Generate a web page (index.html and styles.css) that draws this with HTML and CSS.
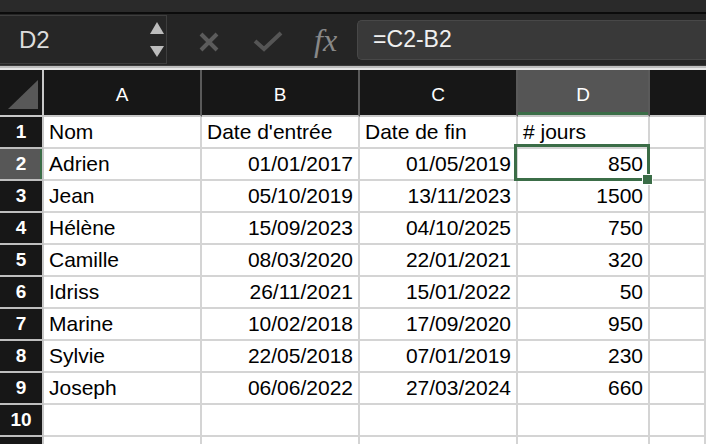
FILE: index.html
```html
<!DOCTYPE html>
<html>
  <head>
    <title>Classeur - jours</title>
    <link rel="stylesheet" href="styles.css">
  </head>
  <body>
    <div class="title-bar"></div>

    <div class="toolbar">
      <div class="name-box">
        <span class="name-text">D2</span>
        <div class="spinner">
          <span class="arrow-up"></span>
          <span class="arrow-down"></span>
        </div>
      </div>

      <svg class="icon icon-cancel" width="22" height="20" viewBox="0 0 22 20">
        <path d="M3 2 L19 18 M19 2 L3 18" stroke="#5b5b5b" stroke-width="4" fill="none"/>
      </svg>
      <svg class="icon icon-ok" width="30" height="21" viewBox="0 0 30 21">
        <path d="M2 10 L11 18 L28 2" stroke="#555555" stroke-width="4" fill="none"/>
      </svg>
      <span class="fx">fx</span>

      <div class="formula-box">=C2-B2</div>
    </div>

    <div class="divider"></div>

    <div class="sheet">
      <div class="corner"><span class="corner-mark"></span></div>
      <div class="col-head">A</div>
      <div class="col-head">B</div>
      <div class="col-head">C</div>
      <div class="col-head col-active">D</div>
      <div class="col-head col-last"></div>

      <div class="row-head">1</div>
      <div class="cell">Nom</div>
      <div class="cell">Date d'entrée</div>
      <div class="cell">Date de fin</div>
      <div class="cell"># jours</div>
      <div class="cell"></div>

      <div class="row-head row-active">2</div>
      <div class="cell">Adrien</div>
      <div class="cell num">01/01/2017</div>
      <div class="cell num">01/05/2019</div>
      <div class="cell num selected">850<span class="fill-handle"></span></div>
      <div class="cell"></div>

      <div class="row-head">3</div>
      <div class="cell">Jean</div>
      <div class="cell num">05/10/2019</div>
      <div class="cell num">13/11/2023</div>
      <div class="cell num">1500</div>
      <div class="cell"></div>

      <div class="row-head">4</div>
      <div class="cell">Hélène</div>
      <div class="cell num">15/09/2023</div>
      <div class="cell num">04/10/2025</div>
      <div class="cell num">750</div>
      <div class="cell"></div>

      <div class="row-head">5</div>
      <div class="cell">Camille</div>
      <div class="cell num">08/03/2020</div>
      <div class="cell num">22/01/2021</div>
      <div class="cell num">320</div>
      <div class="cell"></div>

      <div class="row-head">6</div>
      <div class="cell">Idriss</div>
      <div class="cell num">26/11/2021</div>
      <div class="cell num">15/01/2022</div>
      <div class="cell num">50</div>
      <div class="cell"></div>

      <div class="row-head">7</div>
      <div class="cell">Marine</div>
      <div class="cell num">10/02/2018</div>
      <div class="cell num">17/09/2020</div>
      <div class="cell num">950</div>
      <div class="cell"></div>

      <div class="row-head">8</div>
      <div class="cell">Sylvie</div>
      <div class="cell num">22/05/2018</div>
      <div class="cell num">07/01/2019</div>
      <div class="cell num">230</div>
      <div class="cell"></div>

      <div class="row-head">9</div>
      <div class="cell">Joseph</div>
      <div class="cell num">06/06/2022</div>
      <div class="cell num">27/03/2024</div>
      <div class="cell num">660</div>
      <div class="cell"></div>

      <div class="row-head">10</div>
      <div class="cell"></div>
      <div class="cell"></div>
      <div class="cell"></div>
      <div class="cell"></div>
      <div class="cell"></div>

      <div class="row-head"></div>
      <div class="cell"></div>
      <div class="cell"></div>
      <div class="cell"></div>
      <div class="cell"></div>
      <div class="cell"></div>
    </div>
  </body>
</html>
```

FILE: styles.css
```css
body {
  margin: 0;
  background-color: white;
  font-family: "Liberation Sans", Arial, sans-serif;
  overflow: hidden;
}

.title-bar {
  height: 12px;
  background-color: rgb(42, 42, 42);
  border-bottom: 2px solid rgb(11, 11, 11);
}

.toolbar {
  height: 51px;
  background-color: rgb(37, 37, 37);
  border-bottom: 1px solid rgb(58, 58, 58);
  display: flex;
  align-items: center;
}

.name-box {
  width: 167px;
  height: 49px;
  box-sizing: border-box;
  background-color: rgb(38, 38, 38);
  border: 1px solid rgb(62, 62, 62);
  border-left: none;
  display: flex;
  align-items: center;
  justify-content: space-between;
  padding-left: 19px;
}

.name-text {
  color: rgb(220, 220, 220);
  font-size: 24px;
}

.spinner {
  display: flex;
  flex-direction: column;
  gap: 12px;
  margin-right: 2px;
}

.arrow-up {
  width: 0;
  height: 0;
  border-left: 7px solid transparent;
  border-right: 7px solid transparent;
  border-bottom: 12px solid rgb(188, 188, 188);
}

.arrow-down {
  width: 0;
  height: 0;
  border-left: 7px solid transparent;
  border-right: 7px solid transparent;
  border-top: 11px solid rgb(188, 188, 188);
}

.icon-cancel {
  margin-left: 31px;
  margin-top: 4px;
}

.icon-ok {
  margin-left: 33px;
  margin-top: 4px;
}

.fx {
  font-family: "Liberation Serif", "Times New Roman", serif;
  font-style: italic;
  font-size: 32px;
  color: rgb(136, 136, 136);
  margin-left: 31px;
  margin-top: 2px;
}

.formula-box {
  flex: 1;
  margin-left: 20px;
  height: 40px;
  box-sizing: border-box;
  background-color: rgb(57, 57, 57);
  border: 1px solid rgb(72, 72, 72);
  border-right: none;
  border-radius: 5px 0 0 5px;
  color: rgb(240, 240, 240);
  font-size: 23px;
  padding-left: 15px;
  display: flex;
  align-items: center;
}

.divider {
  height: 2px;
  border-top: 2px solid rgb(190, 190, 190);
  background-color: rgb(230, 230, 230);
}

.sheet {
  display: grid;
  grid-template-columns: 44px 158px 158px 158px 132px 1fr;
  grid-template-rows: 47px repeat(11, 32px);
}

.sheet > div {
  box-sizing: border-box;
}

.corner {
  background-color: rgb(23, 23, 23);
  border-right: 2px solid rgb(200, 200, 200);
  border-bottom: 2px solid rgb(200, 200, 200);
  display: flex;
  align-items: flex-end;
  justify-content: flex-end;
  padding: 0 4px 6px 0;
}

.corner-mark {
  width: 0;
  height: 0;
  border-left: 30px solid transparent;
  border-bottom: 29px solid rgb(88, 88, 88);
}

.col-head {
  background-color: rgb(23, 23, 23);
  color: white;
  font-size: 19px;
  border-right: 2px solid rgb(90, 90, 90);
  border-bottom: 2px solid rgb(200, 200, 200);
  display: flex;
  align-items: center;
  justify-content: center;
  padding-top: 5px;
}

.col-active {
  background-color: rgb(85, 85, 85);
  box-shadow: inset 0 -3px 0 rgb(59, 109, 71);
}

.col-last {
  border-right: none;
}

.row-head {
  background-color: rgb(23, 23, 23);
  color: white;
  font-size: 19px;
  font-weight: bold;
  border-right: 2px solid rgb(200, 200, 200);
  border-bottom: 2px solid rgb(190, 190, 190);
  display: flex;
  align-items: center;
  justify-content: center;
}

.row-active {
  background-color: rgb(87, 87, 87);
  box-shadow: inset -2px 0 0 rgb(59, 109, 71);
}

.cell {
  color: black;
  font-size: 21px;
  line-height: 30px;
  padding: 0 5px;
  border-right: 2px solid rgb(212, 212, 212);
  border-bottom: 2px solid rgb(212, 212, 212);
  white-space: nowrap;
}

.num {
  text-align: right;
}

.selected {
  position: relative;
}

.selected::after {
  content: '';
  position: absolute;
  top: -5px;
  left: -4px;
  right: -2px;
  bottom: -2px;
  border: 3px solid rgb(59, 109, 71);
}

.fill-handle {
  position: absolute;
  right: -4px;
  bottom: -5px;
  width: 9px;
  height: 9px;
  background-color: rgb(59, 109, 71);
  box-shadow: 0 0 0 1px white;
  z-index: 1;
}
```
